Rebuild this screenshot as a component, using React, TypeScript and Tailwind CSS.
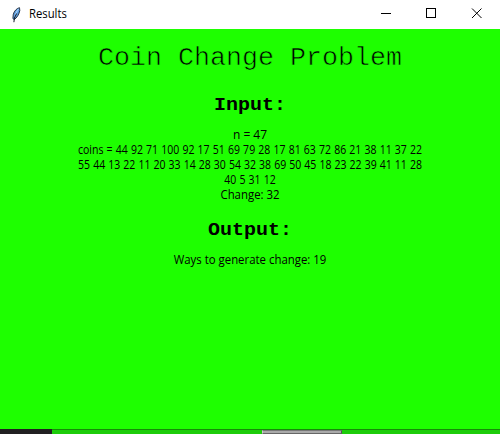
const body = "whitespace-nowrap text-center font-['Open_Sans','Noto_Sans',sans-serif] text-[12px] leading-[15px]";
const heading = "origin-bottom scale-y-90 text-center font-['Liberation_Mono',monospace] text-[20px] font-bold leading-6";

function Feather() {
  return (
    <svg className="h-4 w-4" viewBox="0 0 16 16" aria-hidden="true">
      <path d="M11.5 0.7C8.8 1.2 6.2 4 5.3 7.2L4.9 11.2L6 12.7C9.1 10.8 11.2 7 11.8 3.5Z" fill="#5d9ee0" stroke="#1b2636" strokeWidth="0.9" />
      <path d="M10.7 1.7C9 3.6 7.8 6.3 7 9.7" fill="none" stroke="#b7dcff" strokeWidth="1" />
      <path d="M8.6 6.5L6.4 11L5.9 15.2" fill="none" stroke="#111827" strokeWidth="1" />
    </svg>
  );
}

function TitleBar() {
  return (
    <header className="flex h-[29px] shrink-0 items-center bg-white pl-2">
      <Feather />
      <span className="-mt-px ml-[5px] origin-left scale-x-[0.94] font-['Open_Sans','Noto_Sans',sans-serif] text-[12px] leading-4">Results</span>
      <div className="ml-auto flex h-full items-center pr-[18px]">
        <svg width="101" height="11" viewBox="0 0 101 11" fill="none" stroke="#000" className="-mt-[2px]" shapeRendering="crispEdges">
          <path d="M0 5.5H10" />
          <rect x="45.5" y="0.5" width="9" height="9" />
          <path d="M91 0.5L100.5 10M100.5 0.5L91 10" shapeRendering="geometricPrecision" />
        </svg>
      </div>
    </header>
  );
}

export default function App() {
  return (
    <div className="flex h-[434px] w-[500px] flex-col overflow-hidden bg-[#1eff00] text-black">
      <TitleBar />
      <main className="flex-1">
        <h1 className="mt-[14px] origin-bottom scale-y-[0.94] text-center font-['Liberation_Mono',monospace] text-[26.67px] leading-[30px] [-webkit-text-stroke:0.6px_#1eff00]">Coin Change Problem</h1>
        <h2 className={`${heading} mt-[19px]`}>Input:</h2>
        <div className={`${body} mt-[11px]`}>
          <p>n = 47</p>
          <p className="scale-x-[0.875] [word-spacing:0.5px]">coins = 44 92 71 100 92 17 51 69 79 28 17 81 63 72 86 21 38 11 37 22</p>
          <p className="scale-x-[0.875] [word-spacing:0.4px]">55 44 13 22 11 20 33 14 28 30 54 32 38 69 50 45 18 23 22 39 41 11 28</p>
          <p className="scale-x-[0.875] [word-spacing:0.5px]">40 5 31 12</p>
          <p className="scale-x-[0.95]">Change: 32</p>
        </div>
        <h2 className={`${heading} mt-[15px]`}>Output:</h2>
        <p className={`${body} mt-[11px] scale-x-[0.95]`}>Ways to generate change: 19</p>
      </main>
      <footer className="flex h-[5px] shrink-0 border-t border-[#168b08] bg-[#1dcc0a]">
        <div className="-mt-px h-[5px] w-[52px] bg-[#211f21]" />
        <div className="ml-[210px] h-[4px] w-[80px] border border-t-[#777] border-r-[#555] border-b-[#666] border-l-[#ccc] bg-[#aaa]" />
      </footer>
    </div>
  );
}
